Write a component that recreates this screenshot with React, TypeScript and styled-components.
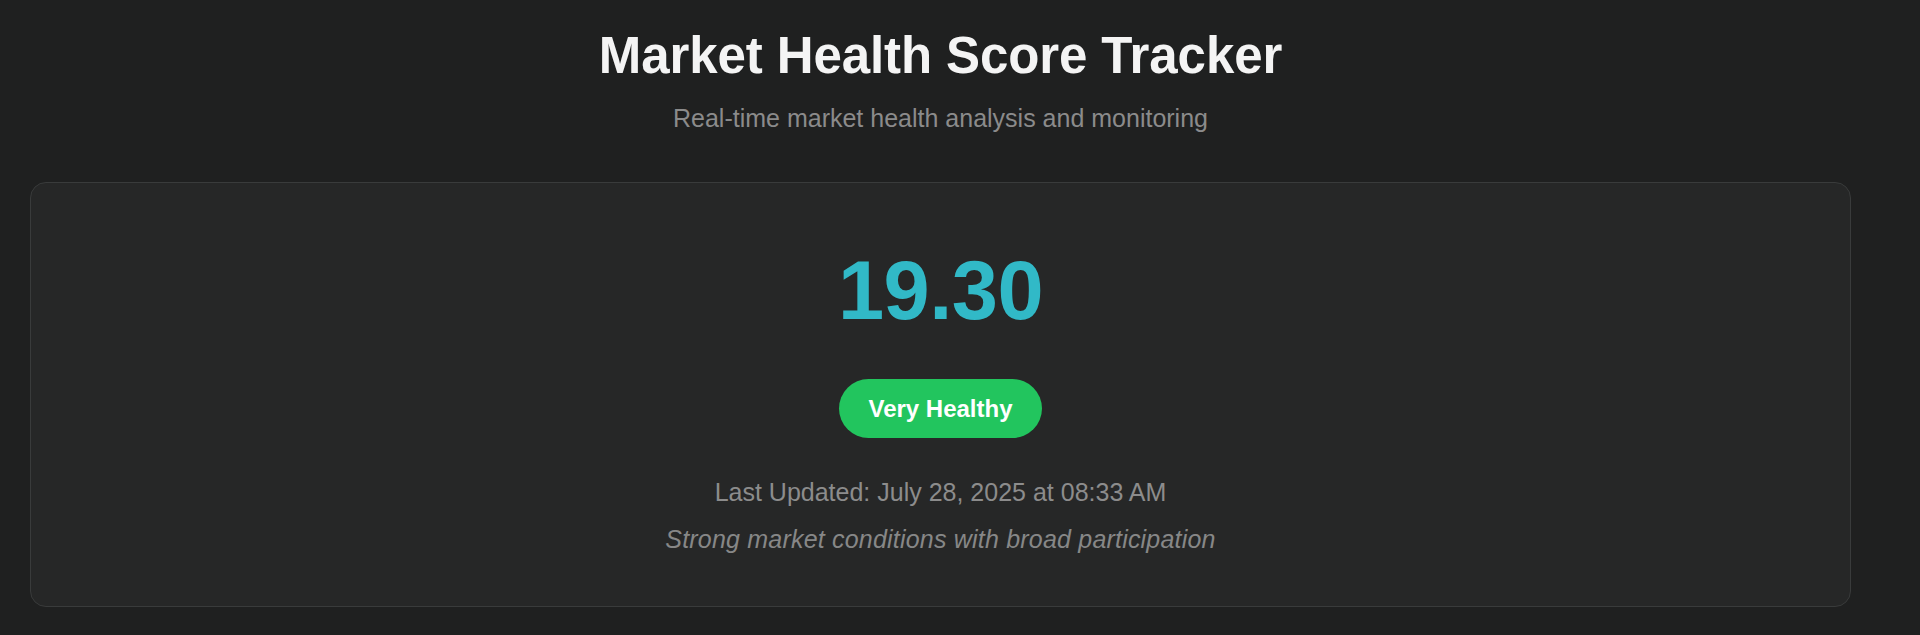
import { ReactElement } from 'react';
import styled, { createGlobalStyle } from 'styled-components';

const GlobalStyle = createGlobalStyle`
  html,
  body {
    background-color: #1f2020;
    margin: 0;
    padding: 0;
  }

  body {
    font-family: 'Liberation Sans', Arial, Helvetica, sans-serif;
  }
`;

const Page = styled.main`
  box-sizing: border-box;
  display: flex;
  flex-direction: column;
  min-height: 635px;
  padding: 25px 69px 30px 30px;
  width: 100%;
`;

const Header = styled.header`
  align-items: center;
  display: flex;
  flex-direction: column;
  gap: 17px;
  margin-bottom: 49px;
`;

const Title = styled.h1`
  color: #f4f4f4;
  font-size: 51px;
  font-weight: 700;
  letter-spacing: -0.1px;
  line-height: 1.2;
  margin: 0;
`;

const Subtitle = styled.p`
  color: #8b8b8b;
  font-size: 25px;
  font-weight: 400;
  line-height: 1.2;
  margin: 0;
`;

const ScoreCard = styled.section`
  align-items: center;
  background-color: #262727;
  border: 1px solid #393b3b;
  border-radius: 16px;
  box-sizing: border-box;
  display: flex;
  flex-direction: column;
  padding: 66px 30px 52px;
  width: 100%;
`;

const ScoreValue = styled.div<{ $color: string }>`
  color: ${({ $color }) => $color};
  font-size: 83px;
  font-weight: 700;
  letter-spacing: -0.5px;
  line-height: 1;
  margin-bottom: 47px;
`;

const StatusBadge = styled.span<{ $bg: string }>`
  background-color: ${({ $bg }) => $bg};
  border-radius: 30px;
  color: #ffffff;
  font-size: 24px;
  font-weight: 700;
  line-height: 27px;
  margin-bottom: 39px;
  padding: 16px 29px;
`;

const UpdatedText = styled.p`
  color: #8c8c8c;
  font-size: 25px;
  line-height: 1.2;
  margin: 0 0 17px;
`;

const Description = styled.p`
  color: #878787;
  font-size: 25px;
  font-style: italic;
  letter-spacing: 0.2px;
  line-height: 1.2;
  margin: 0;
`;

const score = {
  value: 19.3,
  label: 'Very Healthy',
  updated: 'July 28, 2025 at 08:33 AM',
  summary: 'Strong market conditions with broad participation',
};

function App(): ReactElement {
  return (
    <>
      <GlobalStyle />
      <Page>
        <Header>
          <Title>Market Health Score Tracker</Title>
          <Subtitle>Real-time market health analysis and monitoring</Subtitle>
        </Header>
        <ScoreCard>
          <ScoreValue $color="#31b9c7">{score.value.toFixed(2)}</ScoreValue>
          <StatusBadge $bg="#22c55e">{score.label}</StatusBadge>
          <UpdatedText>Last Updated: {score.updated}</UpdatedText>
          <Description>{score.summary}</Description>
        </ScoreCard>
      </Page>
    </>
  );
}

export default App;
